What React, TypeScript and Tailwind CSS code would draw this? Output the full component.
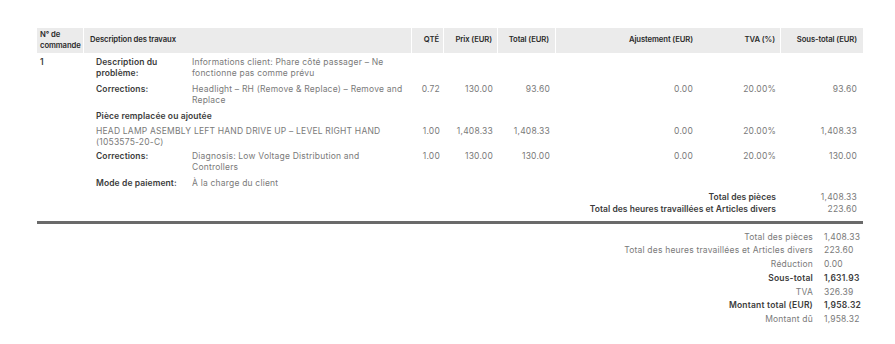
import React from "react";

const font = { fontFamily: "Inter, 'Liberation Sans', sans-serif" };

type Nums = [string, string, string, string, string, string] | null;

const COLS = "grid grid-cols-[47px_328px_32px_54px_58px_144px_81px_82px]";

function NumCells({ n }: { n: Nums }) {
  const v = n ?? ["", "", "", "", "", ""];
  return (
    <>
      <div className="pr-[4px] text-right">{v[0]}</div>
      <div className="pr-[5px] text-right">{v[1]}</div>
      <div className="pr-[6px] text-right">{v[2]}</div>
      <div className="pr-[7px] text-right">{v[3]}</div>
      <div className="pr-[5px] text-right">{v[4]}</div>
      <div className="pr-[6px] text-right">{v[5]}</div>
    </>
  );
}

function LabelRow({
  first,
  label,
  value,
  nums,
  className,
}: {
  first?: string;
  label: React.ReactNode;
  value: React.ReactNode;
  nums: Nums;
  className: string;
}) {
  return (
    <div className={COLS + " " + className}>
      <div className="pl-[3px] font-semibold text-[#3c3c3c] tracking-[0.1px]">{first}</div>
      <div className="grid grid-cols-[96px_1fr] pl-[12px] pr-[8px]">
        <div className="font-semibold text-[#3c3c3c] tracking-[0.1px]">{label}</div>
        <div>{value}</div>
      </div>
      <NumCells n={nums} />
    </div>
  );
}

function FullRow({
  children,
  nums,
  bold,
  className,
}: {
  children: React.ReactNode;
  nums: Nums;
  bold?: boolean;
  className: string;
}) {
  return (
    <div className={COLS + " " + className}>
      <div />
      <div className={"pl-[12px] pr-[8px] " + (bold ? "font-semibold text-[#3c3c3c] tracking-[0.1px]" : "")}>{children}</div>
      <NumCells n={nums} />
    </div>
  );
}

export default function App() {
  return (
    <div className="w-[895px] h-[344px] bg-white overflow-hidden" style={font}>
      <div className="ml-[37px] pt-[28px] w-[826px] text-[8.5px] leading-[10.5px] text-[#7a7a7a] tracking-[0.2px]">
        {/* header */}
        <div className={COLS + " h-[25px] bg-[#ebebeb] text-[7.7px] font-semibold text-[#2a2a2a] leading-[10.5px] tracking-[-0.1px]"}>
          <div className="flex items-center pl-[3px] border-r border-white">N° de<br />commande</div>
          <div className="flex items-center pl-[6px] border-r border-white">Description des travaux</div>
          <div className="flex items-center justify-end pr-[4px] border-r border-white">QTÉ</div>
          <div className="flex items-center justify-end pr-[5px] border-r border-white">Prix (EUR)</div>
          <div className="flex items-center justify-end pr-[6px] border-r border-white">Total (EUR)</div>
          <div className="flex items-center justify-end pr-[7px]">Ajustement (EUR)</div>
          <div className="flex items-center justify-end pr-[5px] border-r border-white">TVA (%)</div>
          <div className="flex items-center justify-end pr-[6px]">Sous-total (EUR)</div>
        </div>

        <LabelRow
          className="mt-[4px]"
          first="1"
          label={<>Description du<br />problème:</>}
          value="Informations client: Phare côté passager – Ne fonctionne pas comme prévu"
          nums={null}
        />
        <LabelRow
          className="mt-[6px]"
          label="Corrections:"
          value="Headlight – RH (Remove & Replace) – Remove and Replace"
          nums={["0.72", "130.00", "93.60", "0.00", "20.00%", "93.60"]}
        />
        <FullRow className="mt-[6px]" bold nums={null}>Pièce remplacée ou ajoutée</FullRow>
        <FullRow className="mt-[4.5px]" nums={["1.00", "1,408.33", "1,408.33", "0.00", "20.00%", "1,408.33"]}>
          HEAD LAMP ASEMBLY LEFT HAND DRIVE UP – LEVEL RIGHT HAND<br />(1053575-20-C)
        </FullRow>
        <LabelRow
          className="mt-[4px]"
          label="Corrections:"
          value={<>Diagnosis: Low Voltage Distribution and<br />Controllers</>}
          nums={["1.00", "130.00", "130.00", "0.00", "20.00%", "130.00"]}
        />
        <LabelRow className="mt-[6px]" label="Mode de paiement:" value="À la charge du client" nums={null} />

        {/* totals */}
        <div className="mt-[2.75px] leading-[12px]">
          <div className="grid grid-cols-[744px_82px]">
            <div className="pr-[5px] text-right font-semibold text-[#3c3c3c] tracking-[0.05px]">Total des pièces</div>
            <div className="pr-[6px] text-right">1,408.33</div>
          </div>
          <div className="grid grid-cols-[744px_82px]">
            <div className="pr-[5px] text-right font-semibold text-[#3c3c3c] tracking-[0.05px]">Total des heures travaillées et Articles divers</div>
            <div className="pr-[6px] text-right">223.60</div>
          </div>
        </div>

        <div className="mt-[6px] h-[3px] bg-[#6a6a6a]" />

        {/* summary */}
        <div className="mt-[6.5px] flex justify-end">
          <div className="grid grid-cols-[auto_39px] gap-x-[11px] leading-[13.7px] text-[#7a7a7a]">
            <div className="text-right">Total des pièces</div>
            <div>1,408.33</div>
            <div className="text-right">Total des heures travaillées et Articles divers</div>
            <div>223.60</div>
            <div className="text-right">Réduction</div>
            <div>0.00</div>
            <div className="text-right font-semibold text-[#3c3c3c]">Sous-total</div>
            <div className="font-semibold text-[#3c3c3c]">1,631.93</div>
            <div className="text-right">TVA</div>
            <div>326.39</div>
            <div className="text-right font-semibold text-[#3c3c3c]">Montant total (EUR)</div>
            <div className="font-semibold text-[#3c3c3c]">1,958.32</div>
            <div className="text-right">Montant dû</div>
            <div>1,958.32</div>
          </div>
        </div>
      </div>
    </div>
  );
}
